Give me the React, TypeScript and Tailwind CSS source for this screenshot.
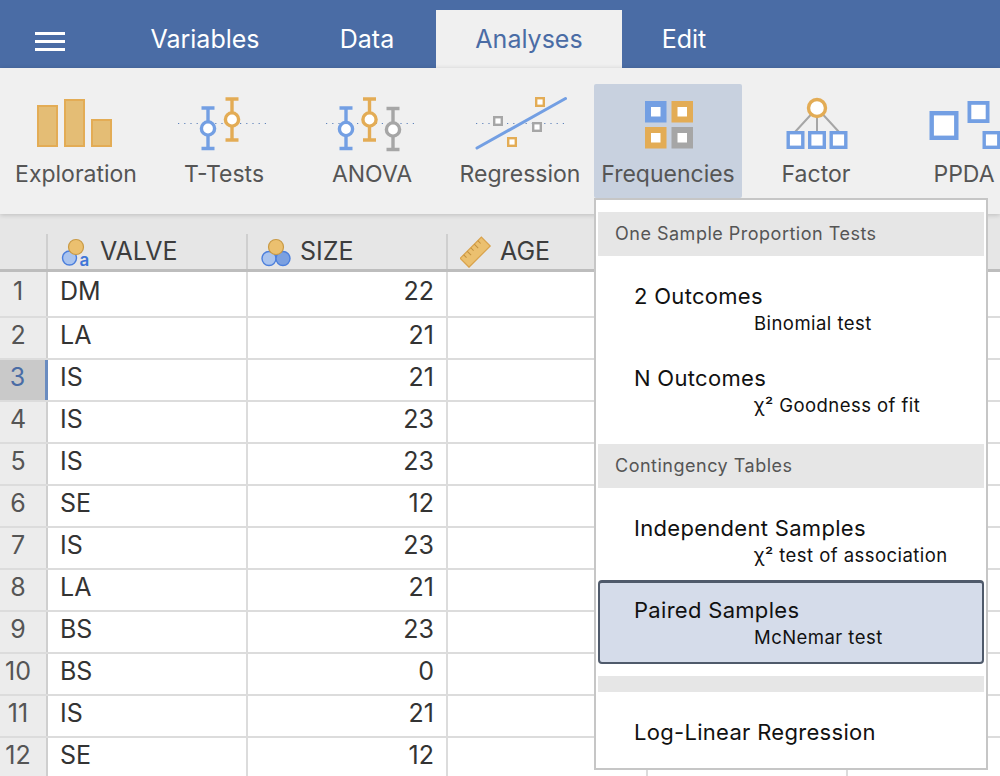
import React from 'react';

const BLUE = '#739fe3';
const GOLD = '#e3ac55';
const GRAY = '#a6a6a6';

const rows = [
  ['DM', 22], ['LA', 21], ['IS', 21], ['IS', 23], ['IS', 23], ['SE', 12],
  ['IS', 23], ['LA', 21], ['BS', 23], ['BS', 0], ['IS', 21], ['SE', 12],
] as const;

// icons use page coordinates through their viewBox
const ToolIcon = ({ box, children }: { box: string; children: React.ReactNode }) => (
  <svg width="148" height="64" viewBox={box} fill="none">
    {children}
  </svg>
);

const ErrorBar = ({ x, top, bottom, cy, color }: { x: number; top: number; bottom: number; cy: number; color: string }) => (
  <g stroke={color} strokeWidth="3.4">
    <path d={`M${x - 6.5} ${top}H${x + 6.5}M${x} ${top}V${bottom}M${x - 6.5} ${bottom}H${x + 6.5}`} />
    <circle cx={x} cy={cy} r="6.6" fill="#fff" />
  </g>
);

const Box = ({ x, y, s, w, color }: { x: number; y: number; s: number; w: number; color: string }) => (
  <rect x={x + w / 2} y={y + w / 2} width={s - w} height={s - w} fill="#fff" stroke={color} strokeWidth={w} />
);

const Dots = ({ from, to }: { from: number; to: number }) => (
  <path d={`M${from} 123.5H${to}`} stroke="#5f83bb" strokeWidth="1.2" strokeDasharray="1.2 5" />
);

const tools: { label: string; active?: boolean; icon: React.ReactNode }[] = [
  {
    label: 'Exploration',
    icon: (
      <ToolIcon box="2 92 148 64">
        <g fill="#e4bd75" stroke={GOLD} strokeWidth="2">
          <rect x="38" y="106" width="19" height="40" />
          <rect x="65" y="100" width="19" height="46" />
          <rect x="92" y="120" width="19" height="26" />
        </g>
      </ToolIcon>
    ),
  },
  {
    label: 'T-Tests',
    icon: (
      <ToolIcon box="150 92 148 64">
        <Dots from={178} to={268} />
        <ErrorBar x={208} top={108} bottom={148.5} cy={128.5} color={BLUE} />
        <ErrorBar x={232} top={99} bottom={140} cy={119.5} color={GOLD} />
      </ToolIcon>
    ),
  },
  {
    label: 'ANOVA',
    icon: (
      <ToolIcon box="298 92 148 64">
        <Dots from={326} to={416} />
        <ErrorBar x={346} top={108} bottom={148.5} cy={129} color={BLUE} />
        <ErrorBar x={369.5} top={99} bottom={140} cy={119.5} color={GOLD} />
        <ErrorBar x={393} top={108.5} bottom={149.5} cy={129.5} color={GRAY} />
      </ToolIcon>
    ),
  },
  {
    label: 'Regression',
    icon: (
      <ToolIcon box="446 92 148 64">
        <Dots from={476} to={567} />
        <path d="M477 148L565.500 98.500" stroke={BLUE} strokeWidth="3" strokeLinecap="round" />
        <Box x={535} y={97} s={10} w={2.4} color={GOLD} />
        <Box x={493} y={116} s={10} w={2.4} color={GRAY} />
        <Box x={532} y={122} s={10} w={2.4} color={GRAY} />
        <Box x={507} y={137} s={10} w={2.4} color={GOLD} />
      </ToolIcon>
    ),
  },
  {
    label: 'Frequencies',
    active: true,
    icon: (
      <ToolIcon box="594 92 148 64">
        <Box x={645} y={101} s={21.500} w={6} color={BLUE} />
        <Box x={671.500} y={101} s={21.500} w={6} color={GOLD} />
        <Box x={645} y={127} s={21.500} w={6} color={GOLD} />
        <Box x={671.500} y={127} s={21.500} w={6} color={GRAY} />
      </ToolIcon>
    ),
  },
  {
    label: 'Factor',
    icon: (
      <ToolIcon box="742 92 148 64">
        <path d="M817 108L795 132M817 108V132M817 108L839 132" stroke={GRAY} strokeWidth="2" />
        <circle cx="817" cy="108" r="8.500" fill="#fff" stroke={GOLD} strokeWidth="3.400" />
        <Box x={786.500} y={131} s={18} w={3.400} color={BLUE} />
        <Box x={808} y={131} s={18} w={3.400} color={BLUE} />
        <Box x={829.500} y={131} s={18} w={3.400} color={BLUE} />
      </ToolIcon>
    ),
  },
  {
    label: 'PPDA',
    icon: (
      <ToolIcon box="890 92 148 64">
        <Box x={929.500} y={111} s={29} w={4.400} color={BLUE} />
        <Box x={967.500} y={101} s={22} w={3.800} color={BLUE} />
        <Box x={982.500} y={131} s={18} w={3.400} color={BLUE} />
      </ToolIcon>
    ),
  },
];

const NominalIcon = () => (
  <svg width="32" height="30" viewBox="60 236 32 30" className="shrink-0 overflow-visible">
    <circle cx="69.500" cy="257" r="7" fill="#aac4ee" stroke="#4c7fdc" strokeWidth="1.400" />
    <circle cx="76" cy="246" r="7.500" fill="#ebc06f" stroke="#c99a45" strokeWidth="1.200" />
    <text x="79.500" y="265" fontSize="17" fontWeight="600" fill="#3f76d8" fontFamily="Inter, sans-serif">a</text>
  </svg>
);

const OrdinalIcon = () => (
  <svg width="32" height="30" viewBox="261 236 32 30" className="shrink-0">
    <circle cx="270" cy="257.500" r="7" fill="#aac4ee" stroke="#4c7fdc" strokeWidth="1.400" />
    <circle cx="284" cy="257.500" r="7" fill="#7ba0e0" stroke="#4c7fdc" strokeWidth="1.400" />
    <circle cx="277" cy="246" r="7.500" fill="#ebc06f" stroke="#c99a45" strokeWidth="1.200" />
  </svg>
);

const RulerIcon = () => (
  <svg width="32" height="32" viewBox="461 236 32 32" className="shrink-0">
    <g transform="rotate(-45 476 252)">
      <rect x="461" y="246" width="30" height="12.500" fill="#ebc06f" stroke="#d9a24b" strokeWidth="1.200" />
      <path d="M466 246v4M471 246v5.500M476 246v4M481 246v5.500M486 246v4" stroke="#c2913f" strokeWidth="1" />
    </g>
  </svg>
);

const HeaderCell = ({ icon, label }: { icon: React.ReactNode; label: string }) => (
  <div className="flex h-full w-[200px] shrink-0 items-center border-r-2 border-[#cfcfcf] pl-[12px] text-[25px] text-[#3d3d3d]">
    {icon}
    <span className="ml-[8px]">{label}</span>
  </div>
);

const MenuSection = ({ label }: { label: string }) => (
  <div className="flex h-[44px] items-center bg-[#e6e6e6] pb-[2px] pl-[17px] text-[18px] tracking-[0.5px] text-[#555]">{label}</div>
);

const MenuItem = ({ title, sub, selected }: { title: string; sub?: string; selected?: boolean }) => (
  <div
    className={
      selected
        ? 'h-[84px] rounded-[4px] border-x-2 border-b-2 border-t-[3px] border-[#4f5a6b] bg-[#d5dcea] pl-[34px] pt-[12px] text-[#111]'
        : 'h-[82px] pl-[36px] pt-[15px] text-[#111]'
    }
  >
    <div className="text-[22px] leading-[30px] tracking-[0.3px]">{title}</div>
    {sub && <div className="pl-[120px] text-[18.5px] leading-[24px] tracking-[0.45px]">{sub}</div>}
  </div>
);

export default function App() {
  return (
    <div className="relative h-[776px] w-[1000px] overflow-hidden bg-white font-['Inter',sans-serif]">
      {/* Tabs */}
      <div className="flex h-[68px] items-end bg-[#4a6ca5] text-[25px] text-white">
        <div className="flex h-full w-[110px] items-center pl-[35px] pt-[14px]">
          <div className="flex w-[30px] flex-col gap-[5px]">
            <div className="h-[3px] bg-white" />
            <div className="h-[3px] bg-white" />
            <div className="h-[3px] bg-white" />
          </div>
        </div>
        <div className="flex h-[58px] w-[190px] items-center justify-center pt-[2px]">Variables</div>
        <div className="flex h-[58px] w-[134px] items-center justify-center pt-[2px]">Data</div>
        <div className="ml-[2px] flex h-[58px] w-[186px] items-center justify-center bg-[#f0f0f0] pt-[2px] text-[#4a6ca5]">Analyses</div>
        <div className="flex h-[58px] w-[126px] items-center justify-center pr-[2px] pt-[2px]">Edit</div>
      </div>

      {/* Toolbar */}
      <div className="relative z-10 flex h-[146px] bg-[#f0f0f0] pl-[2px] pt-[16px] shadow-[0_1px_5px_rgba(0,0,0,0.18)]">
        {tools.map((tool) => (
          <div
            key={tool.label}
            className={`flex h-[114px] w-[148px] shrink-0 flex-col items-center rounded-[2px] pt-[8px] text-[23px] text-[#555] ${tool.active ? 'bg-[#c8d1df]' : ''}`}
          >
            <div className="h-[64px]">{tool.icon}</div>
            <div className="mt-[3px] leading-[30px]">{tool.label}</div>
          </div>
        ))}
      </div>

      {/* Spreadsheet */}
      <div className="h-[20px] bg-[#e6e6e6]" />
      <div className="flex h-[38px] border-b-[3px] border-[#bdbdbd] bg-[#e6e6e6]">
        <div className="h-full w-[48px] shrink-0 border-r-2 border-[#cfcfcf]" />
        <HeaderCell icon={<NominalIcon />} label="VALVE" />
        <HeaderCell icon={<OrdinalIcon />} label="SIZE" />
        <HeaderCell icon={<RulerIcon />} label="AGE" />
        <div className="h-full flex-1" />
      </div>
      {rows.map(([valve, size], i) => (
        <div key={i} className={`flex border-b-2 border-[#dcdcdc] ${i === 0 ? 'h-[46px]' : 'h-[42px]'} text-[25px] leading-[34px] text-[#333]`}>
          <div
            className={`w-[48px] shrink-0 border-r-2 pr-[10px] text-center ${i === 0 ? 'pt-[2px]' : ''} ${
              i === 2 ? 'border-r-[3px] border-[#6a8cc0] bg-[#c9c9c9] text-[#4a6ca5]' : 'border-[#cfcfcf] bg-[#ececec] text-[#555]'
            }`}
          >
            {i + 1}
          </div>
          <div className={`w-[200px] shrink-0 border-r-2 border-[#dcdcdc] pl-[12px] ${i === 0 ? 'pt-[2px]' : ''}`}>{valve}</div>
          <div className={`w-[200px] shrink-0 border-r-2 border-[#dcdcdc] pr-[12px] text-right ${i === 0 ? 'pt-[2px]' : ''}`}>{size}</div>
          <div className="w-[200px] shrink-0 border-r-2 border-[#dcdcdc]" />
          <div className="w-[200px] shrink-0 border-r-2 border-[#dcdcdc]" />
        </div>
      ))}

      {/* Frequencies menu */}
      <div className="absolute left-[594px] top-[198px] z-20 h-[572px] w-[394px] border-2 border-[#c6c6c6] bg-white px-[2px] pt-[12px]">
        <MenuSection label="One Sample Proportion Tests" />
        <div className="pt-[10px]">
          <MenuItem title="2 Outcomes" sub="Binomial test" />
          <MenuItem title="N Outcomes" sub="χ² Goodness of fit" />
        </div>
        <div className="mt-[14px]">
          <MenuSection label="Contingency Tables" />
        </div>
        <div className="pt-[10px]">
          <MenuItem title="Independent Samples" sub="χ² test of association" />
          <MenuItem title="Paired Samples" sub="McNemar test" selected />
        </div>
        <div className="mt-[12px] h-[16px] bg-[#e6e6e6]" />
        <div className="pl-[36px] pt-[25px] text-[22px] leading-[30px] tracking-[0.3px] text-[#111]">Log-Linear Regression</div>
      </div>
    </div>
  );
}
